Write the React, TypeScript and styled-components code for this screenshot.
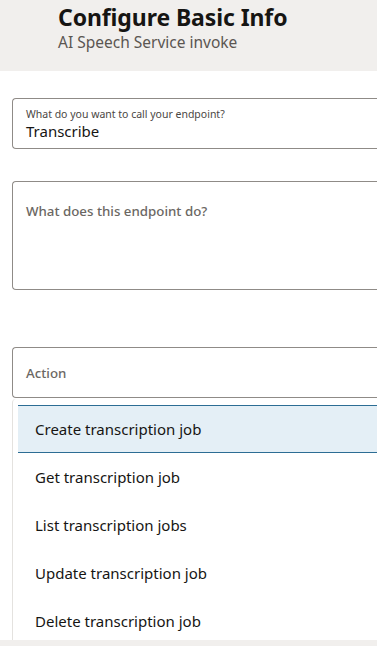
import React from 'react';
import styled, { createGlobalStyle } from 'styled-components';

const GlobalStyle = createGlobalStyle`
  html, body {
    margin: 0;
    padding: 0;
    background: #ffffff;
    overflow: hidden;
  }
  body {
    font-family: 'Noto Sans', 'Open Sans', sans-serif;
    color: #161513;
  }
`;

const Page = styled.div`
  width: 377px;
  height: 646px;
  display: flex;
  flex-direction: column;
`;

const Header = styled.header`
  height: 71px;
  box-sizing: border-box;
  padding: 2px 0 0 58px;
  background-color: #f1efed;
`;

const Title = styled.h1`
  margin: 0;
  font-size: 23px;
  font-weight: 700;
  line-height: 30px;
  color: #161513;
  letter-spacing: -0.1px;
`;

const Subtitle = styled.div`
  font-size: 15.5px;
  line-height: 20px;
  color: #5b5652;
`;

const Form = styled.div`
  flex: 1;
  display: flex;
  flex-direction: column;
  padding: 27px 0 0 12px;
  min-height: 0;
`;

const Field = styled.div<{ $height: number; $gap: number }>`
  height: ${p => p.$height}px;
  margin-top: ${p => p.$gap}px;
  box-sizing: border-box;
  border: 1px solid #8f8b87;
  border-right: none;
  border-radius: 4px 0 0 4px;
  padding: 0 0 0 13px;
  display: flex;
  flex-direction: column;
`;

const FilledField = styled(Field)`
  justify-content: center;
  padding-top: 1px;
`;

const SmallLabel = styled.div`
  font-size: 10.5px;
  line-height: 15px;
  color: #4a4643;
`;

const Value = styled.div`
  font-size: 15px;
  line-height: 19px;
  color: #161513;
`;

const Placeholder = styled.div<{ $top: number }>`
  padding-top: ${p => p.$top}px;
  font-size: 13.3px;
  font-weight: 500;
  line-height: 18px;
  color: #6b6763;
`;

const ActionField = styled(Field)`
  justify-content: center;
`;

const Menu = styled.ul`
  list-style: none;
  margin: 1px 0 0;
  padding: 6px 0 0 5px;
  flex: 1;
  min-height: 0;
  overflow: hidden;
  border-left: 1px solid #e4e2df;
  border-top-left-radius: 4px;
`;

const MenuItem = styled.li<{ $active?: boolean }>`
  height: 48px;
  box-sizing: border-box;
  display: flex;
  align-items: center;
  padding-left: 17px;
  font-size: 15px;
  color: #161513;
  background-color: ${p => (p.$active ? '#e4eff6' : 'transparent')};
  border-top: 1px solid ${p => (p.$active ? '#2c6d94' : 'transparent')};
  border-bottom: 1px solid ${p => (p.$active ? '#2c6d94' : 'transparent')};
`;

const Footer = styled.div`
  height: 6px;
  background-color: #f1efed;
`;

const actions = [
  'Create transcription job',
  'Get transcription job',
  'List transcription jobs',
  'Update transcription job',
  'Delete transcription job',
];

const App: React.FC = () => {
  return (
    <>
      <GlobalStyle />
      <Page>
        <Header>
          <Title>Configure Basic Info</Title>
          <Subtitle>AI Speech Service invoke</Subtitle>
        </Header>
        <Form>
          <FilledField $height={51} $gap={0}>
            <SmallLabel>What do you want to call your endpoint?</SmallLabel>
            <Value>Transcribe</Value>
          </FilledField>
          <Field $height={109} $gap={32}>
            <Placeholder $top={20}>What does this endpoint do?</Placeholder>
          </Field>
          <ActionField $height={51} $gap={57}>
            <Placeholder $top={0}>Action</Placeholder>
          </ActionField>
          <Menu>
            {actions.map((a, i) => (
              <MenuItem key={a} $active={i === 0}>
                {a}
              </MenuItem>
            ))}
          </Menu>
        </Form>
        <Footer />
      </Page>
    </>
  );
};

export default App;
